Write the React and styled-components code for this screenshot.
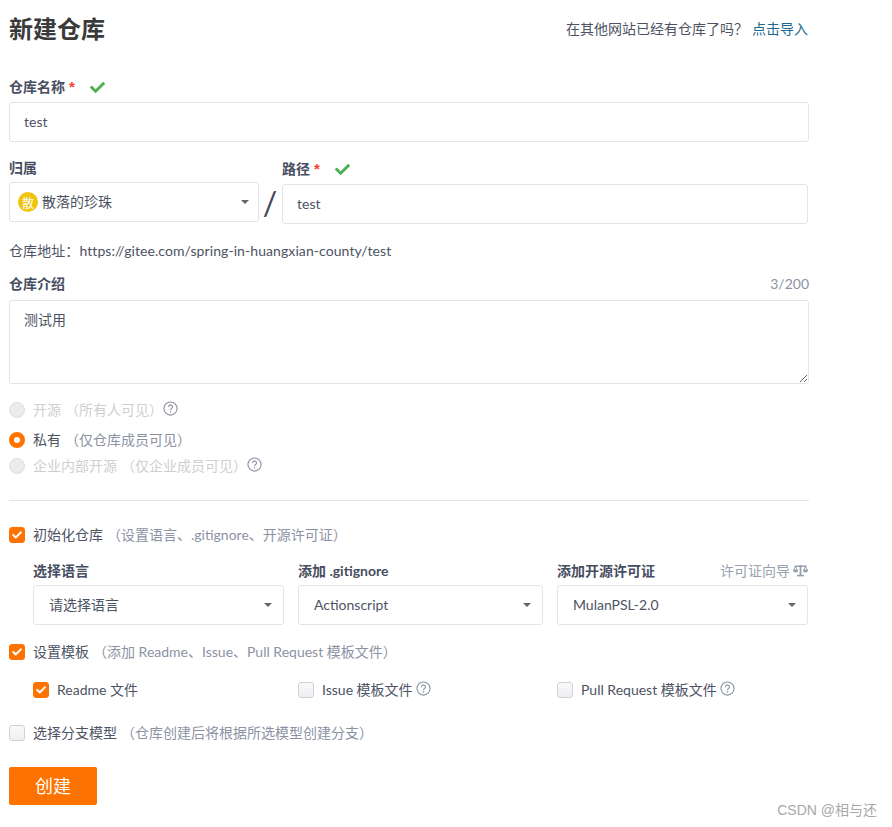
import React from 'react';
import styled, { createGlobalStyle } from 'styled-components';
import { FaCheck } from 'react-icons/fa';

const GlobalStyle = createGlobalStyle`
  body {
    margin: 0;
    background: #fff;
    font-family: Lato, "Noto Sans CJK SC", sans-serif;
    font-size: 14px;
    color: #4d5364;
  }
`;

const Page = styled.div`
  position: relative;
  width: 892px;
  height: 827px;
  box-sizing: border-box;
  padding-left: 9px;
  overflow: hidden;
`;

const Form = styled.form`
  width: 800px;
`;

const Header = styled.div`
  display: flex;
  align-items: center;
  justify-content: space-between;
  height: 58px;
`;

const Title = styled.h1`
  margin: -3px 0 0;
  font-size: 24px;
  font-weight: 700;
  color: #3a3a3a;
`;

const ImportHint = styled.div`
  margin: -2px 1px 0 0;
  color: #4d5364;
`;

const ImportLink = styled.a`
  margin-left: 4px;
  color: #1a6a8f;
`;

const Label = styled.label`
  display: flex;
  align-items: center;
  box-sizing: border-box;
  height: 20px;
  padding-bottom: ${(p) => p.$lift || 0}px;
  margin-top: ${(p) => p.$top || 0}px;
  margin-bottom: ${(p) => p.$bottom ?? 4}px;
  font-weight: 700;
  line-height: 20px;
  color: #474e61;
`;

const Required = styled.span`
  margin-left: 4px;
  font-family: "Liberation Sans", sans-serif;
  font-size: 15px;
  color: #f44336;
`;

const OkIcon = styled(FaCheck)`
  width: 15px;
  height: 15px;
  margin-left: 15px;
  color: #4caf50;
`;

const TextInput = styled.input`
  display: block;
  box-sizing: border-box;
  width: 100%;
  height: 40px;
  padding: 0 14px 2px;
  border: 1px solid #e3e4e9;
  border-radius: 3px;
  outline: none;
  font: inherit;
  color: #4d5364;
`;

const OwnerRow = styled.div`
  display: flex;
  margin-top: 16px;
`;

const OwnerColumn = styled.div`
  flex: none;
  width: 250px;
`;

const Slash = styled.div`
  flex: none;
  display: flex;
  align-items: center;
  justify-content: center;
  width: 22px;
  height: 40px;
  margin-top: 24px;
  font-size: 32px;
  font-weight: 400;
  color: #40485b;
`;

const PathColumn = styled.div`
  flex: none;
  width: 526px;
  margin-left: 1px;
  padding-top: 1px;
`;

const Select = styled.div`
  display: flex;
  align-items: center;
  box-sizing: border-box;
  height: 40px;
  padding: 0 ${(p) => p.$right || 11}px 0 ${(p) => p.$left || 15}px;
  border: 1px solid #e3e4e9;
  border-radius: 3px;
  color: #4d5364;
`;

const SelectText = styled.span`
  flex: 1;
  margin-top: -2px;
`;

const Caret = styled.i`
  width: 0;
  height: 0;
  border-left: 4px solid transparent;
  border-right: 4px solid transparent;
  border-top: 4px solid #666;
`;

const Avatar = styled.span`
  display: flex;
  align-items: center;
  justify-content: center;
  flex: none;
  width: 20px;
  height: 20px;
  margin-right: 4px;
  border-radius: 50%;
  background: #f1c40f;
  font-size: 12px;
  color: #fff;
`;

const Address = styled.div`
  margin-top: 17px;
  line-height: 20px;
  letter-spacing: 0.08px;
  color: #4d5364;
`;

const LabelRow = styled.div`
  display: flex;
  align-items: center;
  justify-content: space-between;
  height: 20px;
  margin-top: ${(p) => p.$top || 0}px;
  margin-bottom: ${(p) => p.$bottom || 4}px;
`;

const Counter = styled.span`
  margin-top: -2px;
  color: #8c92a4;
`;

const TextArea = styled.textarea`
  display: block;
  box-sizing: border-box;
  width: 100%;
  height: 84px;
  padding: 9px 14px;
  border: 1px solid #e3e4e9;
  border-radius: 3px;
  outline: none;
  font: inherit;
  line-height: 20px;
  color: #4d5364;
`;

const OptionRow = styled.div`
  display: flex;
  align-items: center;
  box-sizing: border-box;
  height: 20px;
  padding-bottom: 2px;
  margin-top: ${(p) => p.$top || 0}px;
  color: ${(p) => (p.$disabled ? '#cfcfcf' : '#4d5364')};
`;

const Radio = styled.span`
  flex: none;
  box-sizing: border-box;
  width: 16px;
  height: 16px;
  margin: 2px 8px 0 0;
  border-radius: 50%;
  border: ${(p) => (p.$on ? '5px solid #fe7300' : '1px solid #dedede')};
  background: ${(p) => (p.$on ? '#fff' : '#ebebeb')};
`;

const Box = styled.span`
  flex: none;
  display: flex;
  align-items: center;
  justify-content: center;
  box-sizing: border-box;
  width: 16px;
  height: 16px;
  margin: 2px 8px 0 0;
  border-radius: 3px;
  border: 1px solid ${(p) => (p.$on ? '#fe7300' : '#cfd1d6')};
  background: ${(p) => (p.$on ? '#fe7300' : 'linear-gradient(#f9f9fb, #eeeff3)')};
  color: #fff;
`;

const BoxCheck = styled(FaCheck)`
  width: 10px;
  height: 10px;
`;

const Hint = styled.span`
  margin-left: 4px;
  color: ${(p) => (p.$disabled ? '#cfcfcf' : '#8c92a4')};
`;

const Help = styled.svg`
  flex: none;
  width: 15px;
  height: 15px;
  margin-left: ${(p) => p.$left ?? 3}px;
  margin-top: -1px;
  color: #8c92a4;
`;

const Divider = styled.hr`
  height: 1px;
  margin: 24px 0 0;
  border: 0;
  background: #e3e5e9;
`;

const Columns = styled.div`
  display: grid;
  grid-template-columns: 251px 245px 251px;
  column-gap: 14px;
  margin-top: ${(p) => p.$top}px;
  margin-left: 24px;
`;

const ColumnHead = styled.div`
  display: flex;
  align-items: center;
  justify-content: space-between;
  box-sizing: border-box;
  height: 20px;
  padding-bottom: 2px;
  margin-bottom: 4px;
  font-weight: 700;
  color: #474e61;
`;

const GuideLink = styled.span`
  display: flex;
  align-items: center;
  font-weight: 400;
  color: #9a9fae;
`;

const GuideIcon = styled.svg`
  width: 15px;
  height: 13px;
  margin-left: 3px;
  color: #9a9fae;
`;

const Submit = styled.button`
  display: block;
  width: 88px;
  height: 38px;
  margin-top: 24px;
  padding: 0 0 2px;
  border: 0;
  border-radius: 2px;
  background: #fe7300;
  font: inherit;
  font-size: 18px;
  color: #fff;
`;

const Watermark = styled.div`
  position: absolute;
  right: 15px;
  top: 800px;
  line-height: 20px;
  font-family: "Liberation Sans", "Noto Sans CJK SC", sans-serif;
  color: #a8a8a8;
`;

const HelpIcon = ({ left }) => (
  <Help $left={left} viewBox="0 0 16 16" fill="none" stroke="currentColor">
    <circle cx="8" cy="8" r="7" strokeWidth="1.2" />
    <path d="M5.9 6.3a2.1 2.1 0 1 1 3.3 1.7c-.8.5-1.2.9-1.2 1.8" strokeWidth="1.2" />
    <circle cx="8" cy="11.7" r=".8" fill="currentColor" stroke="none" />
  </Help>
);

const BalanceIcon = () => (
  <GuideIcon viewBox="0 0 15 13" fill="currentColor">
    <path d="M6.6 1h1.8v10H6.6z" />
    <path d="M1.5 1.5h12V3h-12z" />
    <path d="M4 10.8h7v1.6H4z" />
    <path d="M0 5.5h5v.5a2.5 2.5 0 0 1-5 0zM10 5.5h5v.5a2.5 2.5 0 0 1-5 0z" />
    <path d="M2 2.5h1L1.2 6H.4zM2 2.5h1L4.6 6h-.8zM12 2.5h1L11.2 6h-.8zM12 2.5h1L14.6 6h-.8z" />
  </GuideIcon>
);

const App = () => (
  <Page>
    <GlobalStyle />
    <Form>
      <Header>
        <Title>新建仓库</Title>
        <ImportHint>
          在其他网站已经有仓库了吗？<ImportLink>点击导入</ImportLink>
        </ImportHint>
      </Header>

      <Label $top={19} $bottom={5}>
        仓库名称<Required>*</Required>
        <OkIcon />
      </Label>
      <TextInput defaultValue="test" />

      <OwnerRow>
        <OwnerColumn>
          <Label $lift={1}>归属</Label>
          <Select $left={8} $right={9}>
            <Avatar>散</Avatar>
            <SelectText>散落的珍珠</SelectText>
            <Caret />
          </Select>
        </OwnerColumn>
        <Slash>/</Slash>
        <PathColumn>
          <Label $bottom={5}>
            路径<Required>*</Required>
            <OkIcon />
          </Label>
          <TextInput defaultValue="test" />
        </PathColumn>
      </OwnerRow>

      <Address>仓库地址：https://gitee.com/spring-in-huangxian-county/test</Address>

      <LabelRow $top={13} $bottom={6}>
        <Label $bottom={0}>仓库介绍</Label>
        <Counter>3/200</Counter>
      </LabelRow>
      <TextArea defaultValue="测试用" />

      <OptionRow $top={16} $disabled>
        <Radio />
        开源<Hint $disabled>（所有人可见）</Hint>
        <HelpIcon left={0} />
      </OptionRow>
      <OptionRow $top={10}>
        <Radio $on />
        私有<Hint>（仅仓库成员可见）</Hint>
      </OptionRow>
      <OptionRow $top={6} $disabled>
        <Radio />
        企业内部开源<Hint $disabled>（仅企业成员可见）</Hint>
        <HelpIcon left={0} />
      </OptionRow>

      <Divider />

      <OptionRow $top={24}>
        <Box $on>
          <BoxCheck />
        </Box>
        初始化仓库<Hint>（设置语言、.gitignore、开源许可证）</Hint>
      </OptionRow>

      <Columns $top={16}>
        <div>
          <ColumnHead>选择语言</ColumnHead>
          <Select>
            <SelectText>请选择语言</SelectText>
            <Caret />
          </Select>
        </div>
        <div>
          <ColumnHead>添加 .gitignore</ColumnHead>
          <Select>
            <SelectText>Actionscript</SelectText>
            <Caret />
          </Select>
        </div>
        <div>
          <ColumnHead>
            添加开源许可证
            <GuideLink>
              许可证向导
              <BalanceIcon />
            </GuideLink>
          </ColumnHead>
          <Select>
            <SelectText>MulanPSL-2.0</SelectText>
            <Caret />
          </Select>
        </div>
      </Columns>

      <OptionRow $top={17}>
        <Box $on>
          <BoxCheck />
        </Box>
        设置模板<Hint>（添加 Readme、Issue、Pull Request 模板文件）</Hint>
      </OptionRow>

      <Columns $top={18}>
        <OptionRow>
          <Box $on>
            <BoxCheck />
          </Box>
          Readme 文件
        </OptionRow>
        <OptionRow>
          <Box />
          Issue 模板文件
          <HelpIcon />
        </OptionRow>
        <OptionRow>
          <Box />
          Pull Request 模板文件
          <HelpIcon />
        </OptionRow>
      </Columns>

      <OptionRow $top={23}>
        <Box />
        选择分支模型<Hint>（仓库创建后将根据所选模型创建分支）</Hint>
      </OptionRow>

      <Submit type="button">创建</Submit>
    </Form>
    <Watermark>CSDN @相与还</Watermark>
  </Page>
);

export default App;
